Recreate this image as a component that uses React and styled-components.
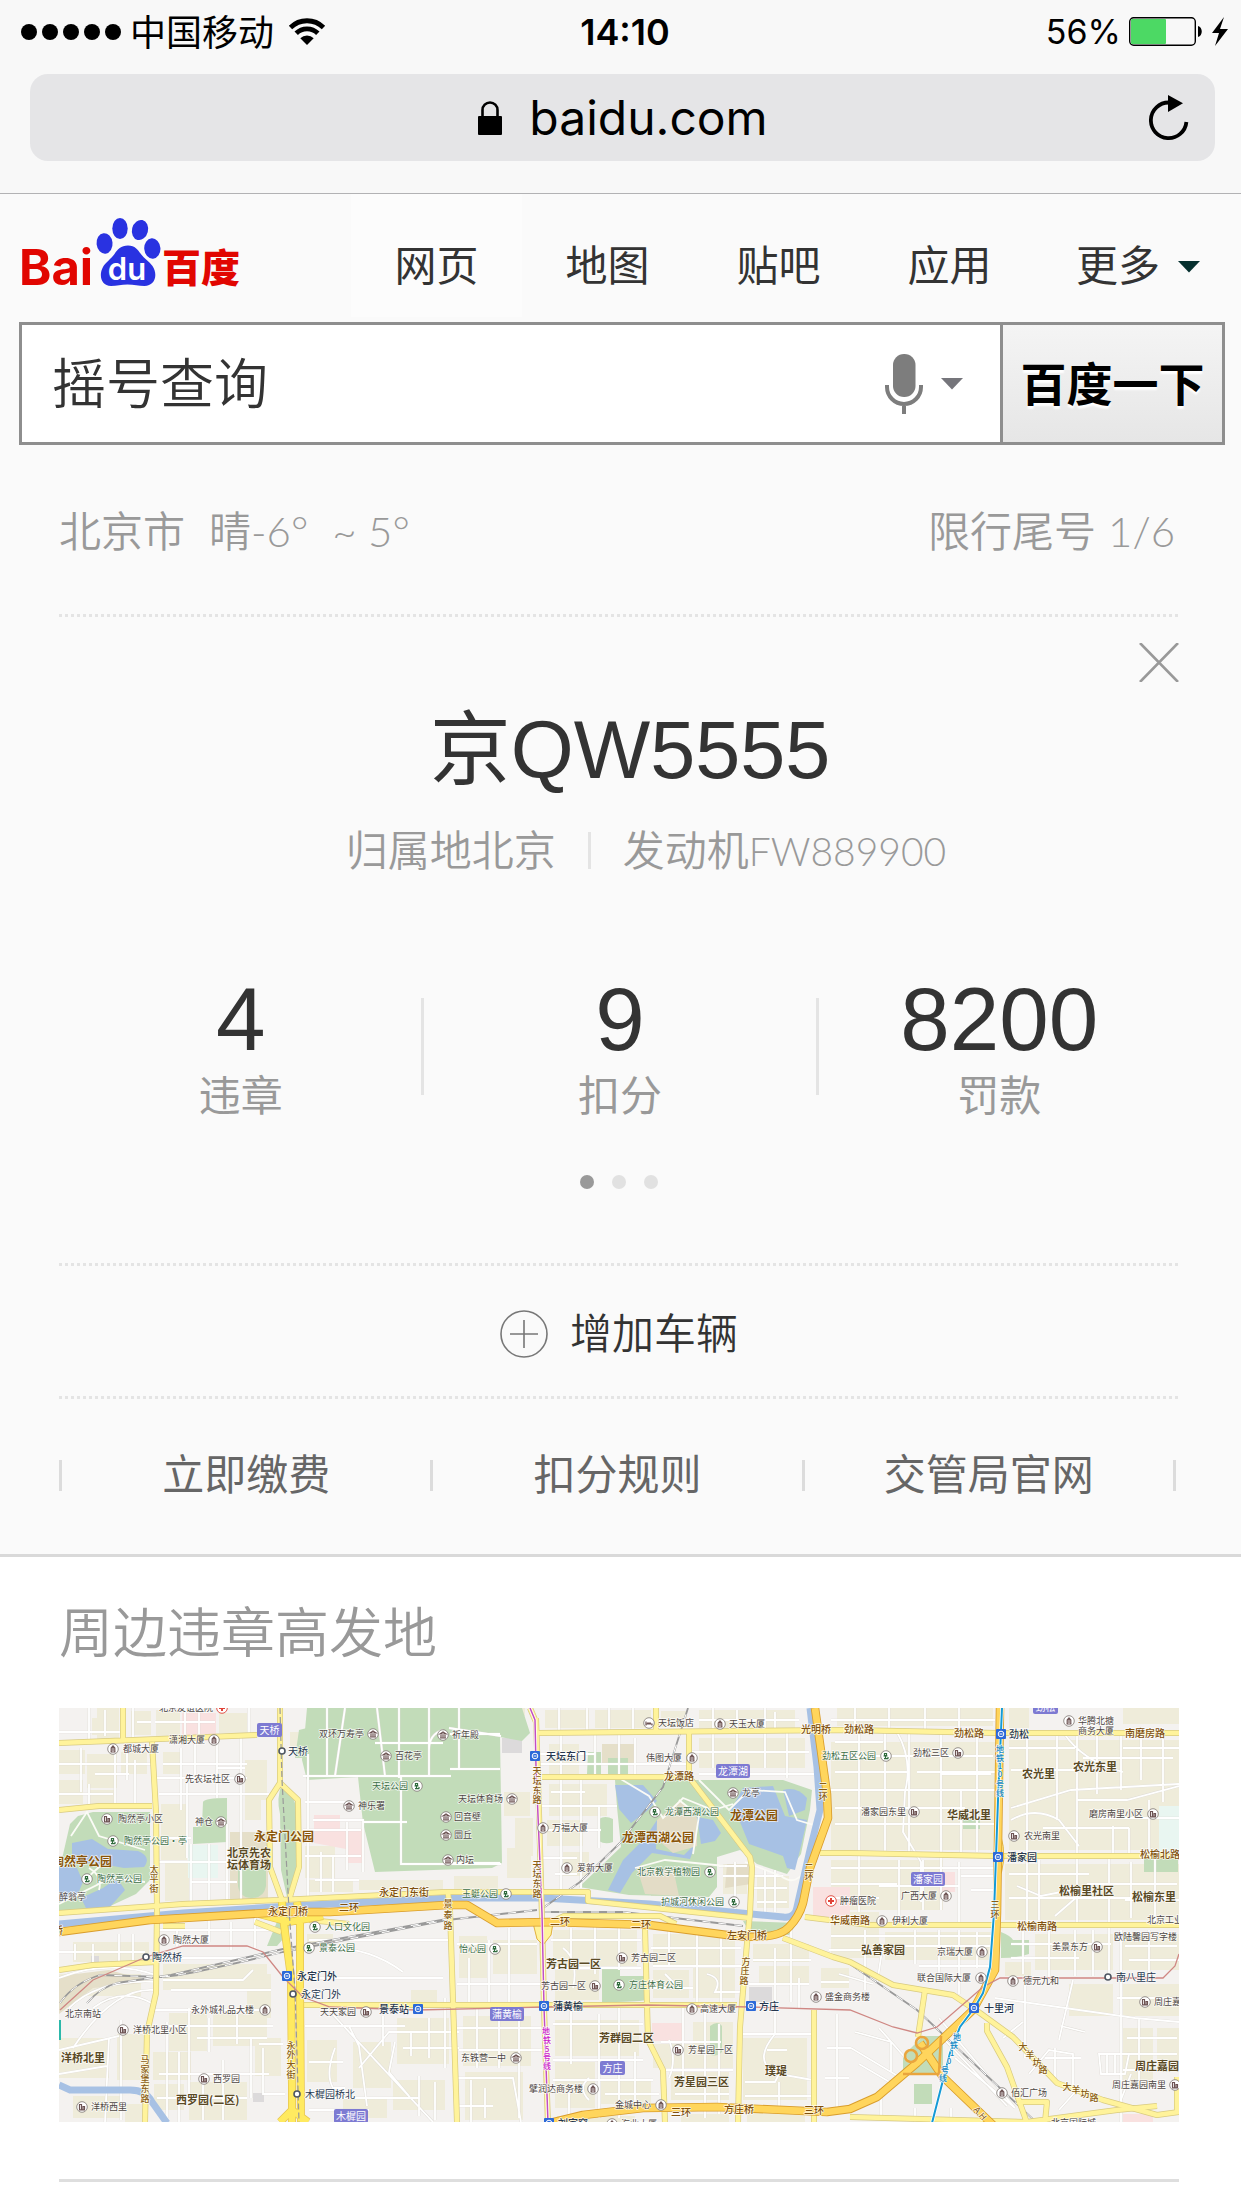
import React from "react";
import styled, { createGlobalStyle } from "styled-components";

const cjk = `"Noto Sans CJK SC", sans-serif`;

const Global = createGlobalStyle`
  * { box-sizing: border-box; }
  body { margin: 0; background: #fff; font-family: "Inter", ${cjk}; color: #333; }
  button, input { font: inherit; color: inherit; border: 0; margin: 0; padding: 0; background: none; }
  a { color: inherit; text-decoration: none; }
  svg { display: block; flex: none; }
`;

/* ---------- browser chrome ---------- */
const Chrome = styled.header`
  background: #f8f8f8;
  border-bottom: 1px solid #b2b2b4;
  padding: 0 26px 32px 30px;
`;
const StatusBar = styled.div`
  display: grid;
  grid-template-columns: 1fr auto 1fr;
  align-items: center;
  height: 74px;
  padding-bottom: 11px;
  margin: 0 -14px 0 -9px;
  color: #000;
  font-size: 34px;
  line-height: 48px;
`;
const StatusGroup = styled.div`
  display: flex;
  align-items: center;
  justify-content: ${(p) => (p.$end ? "flex-end" : "flex-start")};
  gap: ${(p) => (p.$end ? "8px" : "14px")};
`;
const Signal = styled.div`
  display: flex;
  gap: 5px;
  margin-right: -5px;
`;
const SignalDot = styled.i`
  width: 16px;
  height: 16px;
  border-radius: 50%;
  background: #000;
`;
const Carrier = styled.span`
  padding-bottom: 3px;
  font: 36px/48px ${cjk};
`;
const Clock = styled.time`
  font-weight: 600;
  font-size: 36px;
`;
const AddressBar = styled.div`
  display: grid;
  grid-template-columns: 1fr auto 1fr;
  align-items: center;
  height: 87px;
  border-radius: 18px;
  background: #e5e5e7;
  padding: 0 26px;
  color: #000;
`;
const Address = styled.button`
  grid-column: 2;
  display: flex;
  align-items: center;
  gap: 26px;
  font-size: 48px;
  line-height: 60px;
`;
const Reload = styled.button`
  justify-self: end;
`;

/* ---------- nav and search ---------- */
const Main = styled.main`
  background: #fafafa;
  border-bottom: 3px solid #d9d9d9;
`;
const TopNav = styled.nav`
  display: grid;
  grid-template-columns: 351fr repeat(4, 171fr) 206fr;
  height: 123px;
`;
const LogoLink = styled.a`
  padding: 20px 0 0 20px;
`;
const Tab = styled.a`
  display: flex;
  align-items: center;
  justify-content: center;
  gap: 18px;
  padding-top: 14px;
  background: ${(p) => (p.$active ? "#fcfcfc" : "transparent")};
  font: 42px/48px ${cjk};
`;
const TabCaret = styled.span`
  padding-top: 8px;
`;
const SearchForm = styled.form`
  display: flex;
  height: 123px;
  margin: 5px 16px 0 19px;
  border: 3px solid #8e8e8e;
  background: #fff;
`;
const SearchInput = styled.input`
  flex: 1;
  min-width: 0;
  padding: 0 0 6px 30px;
  font: 350 54px/80px ${cjk};
  outline: 0;
`;
const VoiceButton = styled.button`
  display: flex;
  align-items: center;
  gap: 18px;
  padding-right: 37px;
`;
const SearchButton = styled.button`
  width: 222px;
  padding-bottom: 6px;
  border-left: 3px solid #8e8e8e;
  background: linear-gradient(#f4f4f4, #e6e6e6);
  color: #000;
  font: 700 46px/60px ${cjk};
  text-shadow: 0 3px 2px #fff;
`;

/* ---------- vehicle panel ---------- */
const Panel = styled.section`
  margin: 0 62px 0 59px;
`;
const Weather = styled.div`
  display: flex;
  justify-content: space-between;
  padding: 62px 4px 59px 0;
  color: #999;
  font: 350 42px/48px "Lato", ${cjk};
`;
const WeatherPart = styled.span`
  display: flex;
  height: 48px;
  gap: ${(p) => p.$gap || "24px"};
`;
const Latin = styled.span`
  font-weight: 300;
  font-size: ${(p) => p.$size || 42}px;
`;
const Dotted = styled.hr`
  height: 3px;
  margin: 0;
  border: 0;
  background: repeating-linear-gradient(90deg, #e4e4e4 0 3px, transparent 3px 6px);
`;
const CloseRow = styled.div`
  display: flex;
  justify-content: flex-end;
  padding-top: 26px;
`;
const Plate = styled.h1`
  height: 96px;
  margin: 20px 0 28px 22px;
  color: #333;
  text-align: center;
  font: 400 81px/96px "Liberation Sans", ${cjk};
`;
const Detail = styled.p`
  display: flex;
  align-items: center;
  justify-content: center;
  gap: 32px;
  height: 48px;
  margin: 0 0 0 54px;
  color: #999;
  font: 350 42px/48px "Lato", ${cjk};
`;
const Rule = styled.i`
  width: 3px;
  height: ${(p) => p.$h}px;
  background: ${(p) => p.$color || "#e4e4e4"};
`;
const Stats = styled.div`
  display: grid;
  grid-template-columns: 12fr 3px 13fr 3px 12fr;
  align-items: center;
  margin: 98px -1px 0 1px;
`;
const Stat = styled.div`
  display: flex;
  flex-direction: column;
  align-items: center;
`;
const StatNumber = styled.strong`
  color: #333;
  font: 400 89px/94px "Liberation Sans", sans-serif;
`;
const StatLabel = styled.span`
  color: #999;
  font: 42px/54px ${cjk};
`;
const Pager = styled.div`
  display: flex;
  justify-content: center;
  gap: 18px;
  padding: 55px 0 74px;
`;
const PagerDot = styled.button`
  width: 14px;
  height: 14px;
  border-radius: 50%;
  background: ${(p) => (p.$active ? "#999" : "#e1e1e1")};
`;
const AddVehicle = styled.button`
  display: flex;
  align-items: center;
  justify-content: center;
  gap: 22px;
  width: 100%;
  height: 130px;
  padding-top: 5px;
  font: 350 42px/48px ${cjk};
`;
const AddLabel = styled.span`
  padding-bottom: 6px;
`;
const QuickLinks = styled.div`
  display: grid;
  grid-template-columns: 3px 1fr 3px 1fr 3px 1fr 3px;
  align-items: center;
  height: 155px;
  padding-bottom: 3px;
  margin-right: 3px;
`;
const QuickLink = styled.a`
  padding-bottom: 6px;
  color: #666;
  text-align: center;
  font: 42px/48px ${cjk};
`;

const Nearby = styled.section`
  margin: 0 62px 0 59px;
  padding-bottom: 57px;
  border-bottom: 3px solid #dedede;
`;
const NearbyTitle = styled.h2`
  margin: 0;
  padding-bottom: 5px;
  color: #999;
  font: 350 54px/146px ${cjk};
`;
const MapSvg = styled.svg`
  width: 100%;
  height: auto;
  overflow: hidden;
`;

/* ---------- icons ---------- */
const Wifi = () => (
  <svg width="38" height="28" viewBox="0 0 38 28">
    <path d="M2.5 9.5a23.5 23.5 0 0 1 33 0M8.2 15.3a15.3 15.3 0 0 1 21.6 0" fill="none" stroke="#000" strokeWidth="4.8" />
    <path d="M12.3 20.2a9.5 9.5 0 0 1 13.4 0L19 27z" />
  </svg>
);
const Battery = () => (
  <svg width="100" height="30" viewBox="0 0 100 30">
    <rect x=".7" y=".7" width="65.6" height="27.6" rx="4" fill="none" stroke="#000" strokeWidth="1.4" />
    <rect x="2" y="2" width="35" height="25" rx="1" fill="#4cd964" />
    <path d="M69 9c5 1 5 10 0 11z" />
    <path d="M95 0 83 16h7l-4 13 13-17h-8z" />
  </svg>
);
const Lock = () => (
  <svg width="26" height="34" viewBox="0 0 26 34">
    <path d="M5.5 17V9a7.5 7.5 0 0 1 15 0v8" fill="none" stroke="#000" strokeWidth="2.6" />
    <rect x="1" y="15" width="24" height="19" rx="1" />
  </svg>
);
const ReloadIcon = () => (
  <svg width="40" height="46" viewBox="0 0 40 46">
    <path d="M20 7.5A17.8 17.8 0 1 0 37.4 27" fill="none" stroke="#000" strokeWidth="3.8" />
    <path d="m19 0 15 8.3L19 17z" />
  </svg>
);
const Caret = ({ color }) => (
  <svg width="22" height="12" viewBox="0 0 22 12"><path d="M0 0h22L11 11.5z" fill={color} /></svg>
);
const Mic = () => (
  <svg width="38" height="60" viewBox="0 0 38 60" fill="none" stroke="#7d7d7d" strokeWidth="4">
    <rect x="8" y="0" width="22.5" height="43" rx="11" fill="#7d7d7d" stroke="none" />
    <path d="M2 31v2a17 17 0 0 0 34 0v-2M19 50v10" />
  </svg>
);
const Cross = () => (
  <svg width="40" height="39" viewBox="0 0 40 39"><path d="m1 0 38 39M39 0 1 39" stroke="#999" strokeWidth="2.6" /></svg>
);
const PlusCircle = () => (
  <svg width="48" height="48" viewBox="0 0 48 48" fill="none" stroke="#777" strokeWidth="1.6">
    <circle cx="24" cy="24" r="23" /><path d="M24 10v28M10 24h28" />
  </svg>
);
const Logo = () => (
  <svg width="222" height="76" viewBox="0 0 222 76" role="img" aria-label="百度">
    <g fill="#2932e1">
      <ellipse cx="84.5" cy="29.5" rx="8" ry="10.3" transform="rotate(-6 84 29)" />
      <ellipse cx="100" cy="14.5" rx="7.7" ry="10.5" />
      <ellipse cx="120" cy="16" rx="8" ry="10.2" transform="rotate(14 120 16)" />
      <ellipse cx="132.3" cy="34.5" rx="8.1" ry="10.2" transform="rotate(-4 132 34)" />
      <path d="M108 31.5c7 0 10 4.500 12.500 8 3.500 5 8.500 7.500 12 12.500 6 9.500 2 20-8 20-6 0-10.500-1.600-17-1.600S97 72 91 72C81 72 78.500 61 83 53c2.600-4.600 8-8 11.500-13 3-4.500 6.500-8.500 13.500-8.500z" />
    </g>
    <g fill="#e10601" fontFamily="Inter, sans-serif">
      <text x="-1" y="71" fontSize="49" fontWeight="700">Bai</text>
      <text x="142" y="67.500" fontSize="39" fontWeight="900" fontFamily="Noto Sans CJK SC">百度</text>
    </g>
    <text x="107" y="66" fontSize="31" fontWeight="600" fill="#fff" fontFamily="Inter, sans-serif" textAnchor="middle">du</text>
  </svg>
);

/* ---------- map data, in map units 1120 x 414 ---------- */
const blocks = [
  [38, 0, 22, 31], [72, 3, 20, 24], [97, 2, 24, 26], [160, 5, 28, 20], [33, 10, 24, 17],
  [0, 42, 26, 24], [28, 46, 30, 34], [62, 44, 26, 22], [0, 72, 24, 24], [30, 82, 26, 14],
  [104, 44, 18, 22], [186, 52, 22, 40], [102, 96, 26, 56], [40, 110, 28, 20], [106, 155, 24, 38],
  [231, 24, 10, 20], [186, 86, 16, 26], [246, 138, 30, 32], [250, 172, 44, 12], [300, 172, 84, 10],
  [395, 168, 44, 14], [450, 0, 16, 8], [445, 84, 26, 24], [490, 36, 30, 30], [486, 2, 44, 18],
  [536, 2, 56, 18], [602, 3, 26, 16], [640, 2, 96, 18], [640, 30, 106, 30], [490, 76, 58, 32],
  [488, 112, 36, 26], [504, 144, 26, 24], [456, 110, 18, 38], [448, 140, 24, 30],
  [698, 168, 32, 32], [664, 156, 24, 30], [772, 34, 165, 108], [778, 0, 156, 18], [772, 152, 112, 50],
  [950, 32, 170, 110], [950, 0, 20, 20], [1064, 0, 56, 16], [946, 156, 174, 56], [772, 204, 48, 46],
  [826, 224, 106, 28], [976, 226, 78, 36], [1062, 226, 58, 36], [1010, 276, 44, 32], [1064, 276, 56, 32],
  [1064, 320, 30, 60], [1098, 320, 22, 44], [946, 254, 26, 14],
  [14, 234, 76, 20], [0, 266, 82, 22], [104, 256, 104, 26], [188, 266, 24, 44], [110, 305, 38, 38],
  [154, 306, 54, 32], [0, 330, 50, 40], [58, 326, 28, 46], [94, 344, 38, 28], [130, 374, 58, 38],
  [14, 388, 48, 22], [66, 396, 18, 18], [95, 376, 30, 26], [196, 330, 26, 38],
  [248, 226, 26, 12], [352, 282, 26, 16], [248, 332, 30, 42], [294, 334, 38, 46], [338, 310, 52, 46],
  [284, 390, 44, 20], [334, 372, 52, 30], [400, 228, 28, 42], [434, 232, 44, 34], [404, 308, 68, 50],
  [406, 364, 58, 48], [494, 222, 84, 36], [594, 226, 82, 32], [594, 262, 36, 28], [634, 260, 42, 30],
  [496, 262, 44, 30], [496, 312, 84, 36], [496, 354, 40, 46], [542, 372, 50, 24], [594, 336, 80, 24],
  [634, 314, 40, 44], [612, 364, 58, 28], [684, 330, 64, 62], [694, 236, 56, 18], [700, 258, 50, 18],
  [762, 260, 28, 20], [688, 400, 58, 14], [622, 406, 48, 8], [498, 408, 78, 6],
];

const streets = [
  "M30 0v32M0 24h62M46 2v26M74 0v32M78 14h14M96 14h60M126 0v30M140 0v34M190 0v28",
  "M0 56h92M22 40v44M56 38v60M36 66h34M68 42v30M0 86h54M30 76v20M76 52v46",
  "M98 70h90M122 40v62M136 32v40M104 56h84M158 32v58M158 60h28M182 30v166M100 86h110M128 74v76",
  "M98 130h34M100 154h76M132 136v58M150 136v58M168 116v78M132 174h46",
  "M249 46v144M244 122h58M246 148h56M262 144v40M274 148v36M288 114v48M256 172h44M246 94h40M254 112h50v52",
  "M340 0v70M286 0l-10 68M268 0v68M318 0l8 68M244 68h148M342 68v88h100M304 114h44M316 35h68M370 0v68M384 22q-14 4-14 20M442 28l-52-8M400 0v60M391 61h50M391 26h50M391 155h50",
  "M478 46h58M478 98h80M502 26v158M522 70v110M536 26v42M482 122h60M540 98v42M560 26v44M576 30v38M478 56h150M478 150h40M492 84h34M496 166h22",
  "M654 0v60M678 2v56M706 0v60M632 44h118M728 24v46M640 66h128M500 0v24M528 0v24M550 0v24M574 0v24M640 12h100M662 12v12M716 4v20",
  "M660 158h28M664 168h60M676 154v48M706 162v44M716 162v42M694 180h34M698 194h30",
  "M764 82h174M764 48h170M800 24v180M826 24v122M850 24v122M882 22v180M902 82v62M918 24v120M776 64h74M776 100h108M776 116h162M776 34h48M858 64h78M838 24q16 28 8 60l-2 40 18 30v40M860 100h46M882 66h50",
  "M772 160h166M772 176h66M840 152v62M864 152v50M820 178h80M900 154v60M776 190h44M902 168h34M912 182h24M772 12h164M796 0v22M830 0v22M866 0v22M900 0v22",
  "M950 40h66M968 28v190M998 24v88M1018 26v192M1038 28v58M1062 26v56M1082 24v48M1104 26v68M952 62h66M952 100l60-18 108-6M952 112q24-14 48 0l20 26M1018 92h50l52-14M984 120h86M1004 24q20 30 60 40M1064 40h56M1024 50h90M1054 118v28M1070 120v26M1040 110h80M1090 92v52",
  "M950 166h80M958 178l24 10 30-6 16 8M950 190h160M980 152v60M1050 150v120M1072 154v56M1028 176h90M1066 192h54M1096 150v66M996 208l30-26",
  "M772 228h164M770 242h60M806 222v60M824 236l-6 40M856 222v34M880 222v50M900 222v64M918 224v36M846 238h90M860 258h76M780 266l34 10",
  "M952 236h100M964 222v44M990 222v48M1016 222v46M1034 222v46M1062 222v192M1090 222v46M952 250h68M1066 238h52M1070 252h50M936 290l140 20 44 4M966 270v80M1014 272l-14 60M1058 290h62M1068 330h50M1068 346h50M1064 362h36M1002 318l24 6M1080 310v64",
  "M944 330l20-16M970 366l20-24 24 4v36M986 350h36M996 340v34M1040 346h30l-4 20h-24zM1048 346v20M1056 346v20M1000 402l18-20M1058 402l14-36",
  "M820 320l30 34M796 324l36 10v30M792 340l50 30M884 330l64 68M896 350l60 50M880 310l76 90M822 410v-30M856 400v14M892 400v14M800 356l34 20",
  "M0 244h86M16 236v16M34 236v18M60 226v28M74 226v28M0 270q50-20 100-2M10 300q30-30 90-26M100 222h112M118 206v32M150 204v30M172 214v28M196 210v30M104 250h88M104 272h80l10-10M112 282h100",
  "M14 340q40-60 80-58M34 300q30-22 60-4M62 312v100M0 342l60-14M50 330l-4 84M0 366l48-8M96 302h110M108 314v96M130 300v90M150 310v34M178 306v30M110 318h104M138 330h70M100 366h110M120 344v70M144 366v46M164 352v60M192 330v60M200 336h24M204 340v46h22M98 390h90",
  "M250 232h140M272 240q40 0 72 24M248 270h136M246 318h100M290 318l10 20 8 60M276 340q-10 26-2 40h12M264 296l110 118M300 360l30-36h70M324 308v30M336 334l-6 30 20 24M344 340h56M352 324v24M370 310v40M250 354h34M386 290v70M260 390h100M250 402h60M360 368v40M376 374v38",
  "M398 236h80M410 250v44M430 232v64M398 276h86M450 220v78M398 320h90M418 300v60M440 310v50M460 300v110M400 342h84M398 370h56l8 44M412 372v42M426 380v30M400 398h34",
  "M492 232h90M512 220v40M536 216v50M560 218v44M492 260h90M504 240q16 12 10 40M592 240h90M610 222v36M638 226v70M662 230v66M594 258h90M594 280h40M648 266q16 4 8 18h26M606 266l16 16",
  "M494 316h90M512 300v56M540 306v104M494 352h90M560 300v110M576 344v60M494 372h100M546 386h54M510 376v32M530 370q-12 10 0 22M604 362h70M624 300v76M646 300v110M602 334h60M610 370q8-18 0-38M660 316v90M616 386h54",
  "M684 326h70M716 240v86M694 252h58M732 220v74M740 270v30M690 276h60M716 326q-20 24-4 36M708 342h20M686 374h30l4-8 34 6M720 374v32M686 388h66M762 274h28M768 340h24M766 370h24M778 306v94",
];

const parks = [
  "M248 0h215l8 25-8 8-22-4 2 126-10 5-117 4-12-49-5-46-51 3-5-20 3-30z",
  "M556 72h75l93 0 29 10-2 20-9 44-14 20-30-10-17-14-23 7v30l-8 10-80-2-50-8 42-40-4-40z",
  "M11 116l8-8 15-4h57v68l-14 14-30 14-47 8v-44z",
  "M144 94q2-4 24-4v44l-34 2v-17q8 0 9-2z",
  "M223 76q14 14 16 30l-1 56-8 36-8-36-1-56q-4-16 2-30z",
  "M179 160h28v18q-2 12-14 12t-14-12z",
  "M540 111q6-4 14 0v23q-8 3-14-1zM529 44h13v22h-14zM549 50h20v16h-20z",
  "M543 260h18v8h26v24q-10 2-44 2z", "M651 318q8-6 12 0v26q-6 6-12 2z",
  "M844 366v-18l20-20h20v38z", "M855 376h18v20h-18z", "M942 224q10 4 12 8h16v14q-12 4-28 4z",
  "M904 109h17v12h-17z", "M684 213l54 2-8 12-40-4zM208 238l10 0 12-14v-20h-8zM236 50h14l-2-30-8 2z", "M1085 148h34v16h-34z",
];

const water = [
  "M556 77h28l14 16-10 10-16 12-12-14z",
  "M598 112l-12 18-22 22-15 30 12 3 12-20 20-20 38 6 6-16-12 12-28-6z",
  "M638 109l16 3 8 13-6 8-14 3z",
  "M684 80l30-2 12 30 22 4-6 26-6 24-8-2-4-12-34-12-9-22-10-10z",
  "M724 82q14-4 24 8l-2 12-16 6z",
  "M13 135l20-4 16 10 30 2q14 6 6 16l-20 1-22-4-30-2z",
  "M0 158l18 2 6 14-6 14-18 6zM22 190l22-10 14-10 8 12-16 18-22 2z",
];

const majorRoads = [
  "M64 0v33M0 35l100-4 98-4M93 34l4 70 1 98-1 83-9 40-2 90M0 102l40-4 53 0",
  "M221 0v75l-11 17 1 67 12 33M221 75l18 17 1 67-10 33M0 205l124-9 97-4 167-8h141v9l162 17",
  "M0 262l34-5 64-3M389 185l2 17 7 212M241 297h150l197 0h90M478 25l310-3 150 3h182M597 0v24M483 69h148",
  "M630 24v45l61 80 2 10-2 46-3 30-7 84-2 96M586 220l2 77 1 35 15 30 2 53M755 302v112",
  "M761 145h30l147 3h182M746 209l65 8h309M724 230l50 19 17 5 43 23 60 10 27 18 33 24 44 46 46 17 54 15 22-3",
  "M866 282l-7 47M928 315v8l20 36 20 56M791 409l177 5 90-12 40-4M1118 369v36M958 394h30l-2 20M491 215l14-7h96l16 8",
  "M196 214l26 10M250 212l40 4M104 218h22M477 10l2 60 4 140 2 90 4 116M471 0l6 14",
];
const avenue = "M223 194l1 15 8 60 1 110v35M238 194l3 16 0 70 1 134M221 414l12-12 16 12M200 206l30 8 34-6";

const railways = [
  "M1 295q14-20 40-28l60 2q20 0 123-25l164-32 90-10",
  "M28 295q14-16 30-20l54-8 112-26 164-30",
  "M484 200l37-26 40-39 43-56 25-79", "M484 204h80l120 14", "M724 230l67 26 67 46 120 113",
];

const beltways = [
  "M0 224l91-12 133-8 47 0 117-7h20l30 18 53-1 100 3 77 10q50 6 62-8 10-10 14-24l7-35 18-50-1-24-12-86",
  "M941 0l-3 205-2 57-22 40-56 53-40 34-27 12-23 3-110-5-74 1-60 7-33 8",
  "M861 335l23 34 50 48",
];
const metroLine5 = "M471 0l5 12 1 47 6 146 2 94 4 116";
const metroLine10 = "M943 0l-4 92-4 113-4 54-7 26-8 14-15 20-10 26-18 70";

const labels = [
  [64, 41, "都城大厦", 54, "t"], [110, 32, "潇湘大厦", 155, "t"], [126, 71, "先农坛社区", 181, "h"], [59, 111, "陶然亭小区", 48, "h"],
  [136, 114, "神仓", 162, "m"], [65, 133, "陶然亭公园·亭", 54, "p"], [38, 171, "陶然亭公园", 28, "p"], [0, 189, "醉翁亭"],
  [260, 26, "双环万寿亭", 314, "m"], [336, 48, "百花亭", 327, "m"], [313, 78, "天坛公园", 358, "p"], [299, 98, "神乐署", 290, "m"],
  [393, 27, "祈年殿", 384, "m"], [100, 0, "北京友谊医院", 163, "r"], [599, 15, "天坛饭店", 590, "b"], [670, 16, "天玉大厦", 661, "t"],
  [587, 50, "伟图大厦", 633, "t"], [399, 91, "天坛体育场", 453, "m"], [395, 109, "回音壁", 387, "m"], [395, 127, "圜丘", 387, "m"],
  [397, 152, "内坛", 389, "m"], [493, 120, "万福大厦", 484, "t"], [518, 160, "爱新大厦", 508, "t"], [606, 104, "龙潭西湖公园", 596, "p"],
  [683, 85, "龙亭", 674, "m"], [578, 164, "北京教学植物园", 651, "p"], [602, 194, "护城河休闲公园", 675, "p"], [403, 186, "玉蜓公园", 447, "p"],
  [763, 48, "劲松五区公园", 827, "p"], [781, 193, "肿瘤医院", 772, "r"], [1019, 13, "华腾北搪", 1010, "t"], [1019, 23, "商务大厦"],
  [854, 45, "劲松三区", 899, "h"], [802, 104, "潘家园东里", 855, "h"], [1030, 106, "磨房南里小区", 1094, "h"], [965, 128, "农光南里", 955, "h"],
  [842, 188, "广西大厦", 887, "t"], [1088, 212, "北京工业"], [833, 213, "伊利大厦", 823, "t"], [1055, 229, "欧陆馨园写字楼"],
  [993, 239, "美景东方", 1038, "h"], [878, 244, "京瑞大厦", 923, "t"], [858, 270, "联合国际大厦", 922, "t"], [964, 273, "德元九和", 954, "t"],
  [1095, 294, "周庄嘉园", 1086, "h"], [766, 289, "盛金商务楼", 757, "t"], [1053, 377, "周庄嘉园南里", 1116, "h"], [952, 385, "佰汇广场", 943, "t"],
  [992, 415, "北京国际城"], [114, 232, "陶然大厦", 105, "t"], [266, 219, "人口文化园", 256, "p"], [260, 240, "景泰公园", 250, "p"],
  [261, 304, "天天家园", 307, "h"], [132, 302, "永外城礼品大楼", 206, "t"], [6, 306, "北京南站"], [74, 322, "洋桥北里小区", 64, "h"],
  [154, 371, "西罗园", 145, "h"], [32, 399, "洋桥西里", 23, "h"], [400, 241, "怡心园", 436, "p"], [572, 250, "芳古园二区", 563, "h"],
  [482, 278, "芳古园一区", 536, "h"], [570, 277, "方庄体育公园", 560, "p"], [641, 301, "高速大厦", 633, "t"], [629, 342, "芳星园一区", 619, "h"],
  [402, 350, "东铁营一中", 457, "m"], [470, 381, "擘润达商务楼", 534, "t"], [556, 397, "金城中心", 602, "t"], [562, 416, "海业大厦", 553, "t"],
];

const districts = [
  [168, 145, "北京先农"], [168, 157, "坛体育场"], [963, 66, "农光里"], [1014, 59, "农光东里"], [888, 107, "华威北里"],
  [1000, 183, "松榆里社区"], [1073, 189, "松榆东里"], [802, 242, "弘善家园"], [1076, 358, "周庄嘉园("], [2, 350, "洋桥北里"],
  [117, 392, "西罗园(二区)"], [487, 256, "芳古园一区"], [540, 330, "芳群园二区"], [615, 374, "芳星园三区"], [706, 363, "璞瑅"],
];
const scenic = [[-7, 154, "陶然亭公园"], [195, 129, "永定门公园"], [563, 130, "龙潭西湖公园"], [671, 108, "龙潭公园"]];
const roadNames = [
  [320, 184, "永定门东街"], [280, 199, "二环"], [209, 203, "永定门桥"], [742, 21, "光明桥"], [785, 21, "劲松路"], [605, 68, "龙潭路"],
  [895, 25, "劲松路"], [1066, 25, "南磨房路"], [1081, 146, "松榆北路"], [958, 218, "松榆南路"], [771, 212, "华威南路"], [-6, 222, "桥"],
  [491, 213, "二环"], [572, 216, "二环"], [668, 227, "左安门桥"], [612, 404, "三环"], [665, 401, "方庄桥"], [745, 402, "三环"],
];
const verticalNames = [
  ["太平街", [95, 162], [95, 171], [95, 181]], ["天坛东路", [478, 63], [478, 73], [478, 83], [478, 92]],
  ["天坛东路", [478, 157], [478, 166], [478, 176], [478, 186]], ["景泰路", [389, 196], [389, 207], [389, 218]],
  ["二环", [764, 79], [764, 89]], ["二环", [750, 160], [750, 169]], ["三环", [936, 197], [936, 207]],
  ["大羊坊路", [964, 339], [971, 347], [978, 355], [984, 362]], ["大羊坊路", [1008, 379], [1017, 382], [1026, 386], [1035, 390]],
  ["马家堡东路", [86, 352], [86, 362], [86, 371], [86, 381], [86, 391]], ["永外大街", [232, 338], [232, 347], [232, 357], [232, 367]],
  ["方庄路", [687, 254], [686, 263], [685, 273]],
];
const metroNames = [
  ["地铁10号线", "#1187c4", [941, 41], [941, 50], [941, 58], [941, 66], [941, 76], [941, 85]],
  ["地铁10号线", "#1187c4", [898, 329], [895, 337], [893, 345], [890, 353], [886, 362], [884, 370]],
  ["地铁5号线", "#cc22cc", [487, 323], [488, 332], [488, 341], [488, 349], [488, 358]],
];
const stations = [
  [476, 48, 487, "天坛东门"], [942, 26, 950, "劲松"], [939, 149, 948, "潘家园"], [915, 300, 925, "十里河"], [228, 268, 238, "永定门外"],
  [359, 301, 320, "景泰站"], [485, 298, 494, "蒲黄榆"], [692, 298, 700, "方庄"], [490, 415, 499, "刘家窑"],
];
const stops = [[223, 43, 229, "天桥"], [87, 249, 93, "陶然桥"], [234, 286, 242, "永定门外"], [238, 386, 246, "木樨园桥北"], [1049, 269, 1057, "南八里庄"]];
const badges = [[198, 22, 25, "天桥"], [657, 63, 34, "龙潭湖"], [852, 171, 34, "潘家园"], [974, -1, 25, "劲松"], [275, 408, 34, "木樨园"], [431, 306, 34, "蒲黄榆"], [541, 360, 25, "方庄"]];

const poiGlyph = {
  t: "M-2.500 3h5M-1.800 2.500v-3.500L0-3l1.800 2v3.500M0-2v4",
  h: "M-2.500 2.500v-5h2v5M1 2.500v-3h1.500v3M-3 2.800h6",
  m: "M-3-1L0-3l3 2zM-2 0v2M0 0v2M2 0v2M-3 2.800h6",
  b: "M-3-1.500v4M-3 1h6v1.500M-2 0h4",
  p: "M-1.500-2.500h2v2h-2zM-2.500 0h4M-.500 0v2.500M-2 2.700h4.500M2 1v1",
  r: "M0-3v6M-3 0h6",
};
const Poi = ({ x, y, kind }) => {
  const color = kind === "p" ? "#2f6b3c" : kind === "r" ? "#e04338" : "#6d5353";
  return (
    <g transform={`translate(${x} ${y})`} fill="none" stroke={color}>
      <circle r="5.300" fill="#fff" stroke={kind === "r" ? color : "#8b8580"} strokeWidth=".9" />
      <path d={poiGlyph[kind]} strokeWidth={kind === "r" ? 2 : 1.2} />
    </g>
  );
};
const Stacked = ({ text, points, color, size }) =>
  points.map(([x, y], i) => (
    <text key={i} x={x} y={y + 3} fontSize={size} fontWeight="500" fill={color} textAnchor="middle">
      {text.startsWith("地铁10") ? ["地", "铁", "1", "0", "号", "线"][i] : text[i]}
    </text>
  ));

const CityMap = () => (
  <MapSvg viewBox="0 0 1120 414" role="img" aria-label="周边违章高发地地图" fontFamily="Noto Sans CJK SC, sans-serif">
    <rect width="1120" height="414" fill="#f4f2f0" />
    {blocks.map(([x, y, w, h], i) => <rect key={i} x={x} y={y} width={w} height={h} fill="#efecda" />)}
    <path d="M123 5h34v28h-34zM255 107h26v14h24l-2 34h-16v-14l-32-6zM754 179h37v32h-37zM593 315h30v18h-30zM1064 406h30v8h-30zM880 164h16v20h-16z" fill="#f9e1e0" />
    <path d="M129 137h30v33h-30zM1100 98h20v48h-20z" fill="#e9f6f1" />
    <path d="M443 30h20v15h-20zM690 279h23v15h-23zM194 385h11v9h-11zM32 248h8v7h-8z" fill="#dcdadb" />
    <path d="M171 124h38v68h-38zM590 164l22 0 8 24-28 0zM543 36h33v19h-33zM0 268l50-6 44 12-60 6-34 26z" fill="#e5dfc9" />
    {parks.map((d) => <path key={d} d={d} fill="#c2dcb9" />)}
    {water.map((d) => <path key={d} d={d} fill="#a7c1e4" />)}
    <path d="M598 112l23-20 17 18v28l-24 7-16-14zM578 160l36 0 6 28-34-2zM668 156l24 0v20l-26 4z" fill="#e3dcc6" />
    <g fill="none" stroke="#dedbd5" strokeWidth="2.600">{streets.map((d) => <path key={d} d={d} />)}</g>
    <g fill="none" stroke="#fff" strokeWidth="1.800">{streets.map((d) => <path key={d} d={d} />)}</g>
    <path d="M12 128l16-24 12 24 46 14M28 170l22-20M0 196l52-26 34 4M30 160q14 8 10 22M560 70l30 18 14 22 20-20 30 12 20-6M576 160l30-8 60 6M620 92l20 16-6 38M640 72l30 30 20-20 36 2 12 28 20 6-10 40q-10 22-26 10l-36-14" fill="none" stroke="#fbfbf6" strokeWidth="1.800" />
    <g fill="none" stroke="#a7c1e4" strokeWidth="7">
      <path d="M0 216l124-11 107-7 160-8h93l107 6 133 13q12 2 14-10l13-57 10-40-3-43-7-59" />
      <path d="M0 377l11 5h60q16 0 22 12l15 21" />
    </g>
    <g fill="none" stroke="#999" strokeWidth="1.800">{railways.map((d) => <path key={d} d={d} />)}</g>
    <g fill="none" stroke="#fff" strokeWidth="1" strokeDasharray="8 8">{railways.map((d) => <path key={d} d={d} />)}</g>
    <g fill="none" stroke="#d9cb80" strokeWidth="6" strokeLinejoin="round">{majorRoads.map((d) => <path key={d} d={d} />)}</g>
    <g fill="none" stroke="#fff39b" strokeWidth="4.600" strokeLinejoin="round">{majorRoads.map((d) => <path key={d} d={d} />)}</g>
    <path d={avenue} fill="none" stroke="#e6c552" strokeWidth="8" />
    <path d={avenue} fill="none" stroke="#ffea60" strokeWidth="6.500" />
    <path d="M221 0l2 72 7 130 6 80 4 132" fill="none" stroke="#999" strokeWidth="1.200" strokeDasharray="6 3" />
    <path d="M941 124q-10 16-3 50 12-20 3-50zM474 215l4 16 6 6 8-10 2-12" fill="#fff39b" stroke="#e2b13e" />
    <g fill="none" stroke="#d99d2c" strokeWidth="8.500" strokeLinejoin="round">{beltways.map((d) => <path key={d} d={d} />)}</g>
    <g fill="none" stroke="#ffd55c" strokeWidth="6.800" strokeLinejoin="round">{beltways.map((d) => <path key={d} d={d} />)}</g>
    <g fill="none" stroke="#e9a53e" strokeWidth="2.600">
      <circle cx="863" cy="335" r="6" /><circle cx="852" cy="348" r="6" /><path d="M844 366h36l2-38" />
    </g>
    <path d="M1 302l33-30 53-23 37-11h64l16 6 20 25 20 20 27 10 87 3 126-3 104-2 103 2 100 3 43 17 24 6 20-6 46-40 17-9h163l12-12 4-12" fill="none" stroke="#cf8783" strokeWidth="1.300" />
    <path d={metroLine5} fill="none" stroke="#fff" strokeWidth="3" />
    <path d={metroLine5} fill="none" stroke="#c24fc0" strokeWidth="1.500" />
    <path d={metroLine10} fill="none" stroke="#fff" strokeWidth="3.500" />
    <path d={metroLine10} fill="none" stroke="#159ad6" strokeWidth="2" />
    <path d="M0 312v20" stroke="#2cb8aa" strokeWidth="4" />
    <g stroke="#fff" strokeOpacity=".75" strokeWidth="1.600" paintOrder="stroke" strokeLinejoin="round">
      <g fontSize="9">
        {labels.map(([x, y, t, , kind]) => <text key={t + x} x={x} y={y + 3} fill={kind === "p" ? "#3d6e48" : "#4e4744"}>{t}</text>)}
      </g>
      <g fontSize="11" fontWeight="700" fill="#5a4a25">
        {districts.map(([x, y, t]) => <text key={t + x} x={x} y={y + 4}>{t}</text>)}
      </g>
      <g fontSize="12" fontWeight="700" fill="#8a5508">
        {scenic.map(([x, y, t]) => <text key={t + x} x={x} y={y + 4}>{t}</text>)}
      </g>
      <g fontSize="10" fontWeight="500" fill="#80500e">
        {roadNames.map(([x, y, t]) => <text key={t + x} x={x} y={y + 4}>{t}</text>)}
      </g>
      {verticalNames.map(([t, ...pts]) => <Stacked key={t + pts[0]} text={t} points={pts} color="#8a5d14" size="9" />)}
      {metroNames.map(([t, c, ...pts]) => <Stacked key={t + pts[0]} text={t} points={pts} color={c} size="8" />)}
      <g fontSize="10" fill="#26374f">
        {stations.map(([, y, x, t]) => <text key={t} x={x} y={y + 4} fontWeight="500">{t}</text>)}
        {stops.map(([, y, x, t]) => <text key={t} x={x} y={y + 4}>{t}</text>)}
      </g>
      <text x="914" y="402" fontSize="9" fill="#80561a" transform="rotate(50 914 402)">A.H</text>
    </g>
    {labels.filter((l) => l[3]).map(([x, y, t, ix, kind]) => <Poi key={t + x} x={ix} y={y} kind={kind} />)}
    {stations.map(([x, y, , t]) => (
      <g key={t} transform={`translate(${x} ${y})`}>
        <rect x="-5" y="-5" width="10" height="10" rx="1" fill="#2c69d8" />
        <circle r="2.800" fill="none" stroke="#fff" />
        <path d="M-1.500 0h3" stroke="#fff" />
      </g>
    ))}
    {stops.map(([x, y, , t]) => <circle key={t} cx={x} cy={y} r="3" fill="#fff" stroke="#4e5663" strokeWidth="1.600" />)}
    {badges.map(([x, y, w, t]) => (
      <g key={t}>
        <rect x={x} y={y - 7} width={w} height="14" rx="2" fill="#7d7ad2" />
        <text x={x + w / 2} y={y + 4} fontSize="10" fill="#fff" textAnchor="middle">{t}</text>
      </g>
    ))}
  </MapSvg>
);

const stats = [["4", "违章"], ["9", "扣分"], ["8200", "罚款"]];

export default function App() {
  return (
    <>
      <Global />
      <Chrome>
        <StatusBar>
          <StatusGroup>
            <Signal>{[0, 1, 2, 3, 4].map((n) => <SignalDot key={n} />)}</Signal>
            <Carrier>中国移动</Carrier>
            <Wifi />
          </StatusGroup>
          <Clock>14:10</Clock>
          <StatusGroup $end>
            <span>56%</span>
            <Battery />
          </StatusGroup>
        </StatusBar>
        <AddressBar>
          <Address type="button"><Lock />baidu.com</Address>
          <Reload type="button" aria-label="刷新"><ReloadIcon /></Reload>
        </AddressBar>
      </Chrome>

      <Main>
        <TopNav>
          <LogoLink href="#home"><Logo /></LogoLink>
          <Tab href="#web" $active>网页</Tab>
          <Tab href="#map">地图</Tab>
          <Tab href="#tieba">贴吧</Tab>
          <Tab href="#apps">应用</Tab>
          <Tab href="#more">更多<TabCaret><Caret color="#06302f" /></TabCaret></Tab>
        </TopNav>
        <SearchForm onSubmit={(e) => e.preventDefault()}>
          <SearchInput aria-label="搜索" defaultValue="摇号查询" />
          <VoiceButton type="button" aria-label="语音搜索"><Mic /><Caret color="#75757b" /></VoiceButton>
          <SearchButton type="submit">百度一下</SearchButton>
        </SearchForm>

        <Panel>
          <Weather>
            <WeatherPart>
              <span>北京市</span>
              <span>晴<Latin>-6°</Latin></span>
              <Latin>~ 5°</Latin>
            </WeatherPart>
            <WeatherPart $gap="12px"><span>限行尾号</span><Latin>1/6</Latin></WeatherPart>
          </Weather>
          <Dotted />
          <CloseRow><button type="button" aria-label="关闭"><Cross /></button></CloseRow>
          <Plate>京QW5555</Plate>
          <Detail><span>归属地北京</span><Rule $h={37} /><span>发动机<Latin $size={39}>FW889900</Latin></span></Detail>
          <Stats>
            {stats.map(([n, label], i) => (
              <React.Fragment key={label}>
                {i > 0 && <Rule $h={97} />}
                <Stat><StatNumber>{n}</StatNumber><StatLabel>{label}</StatLabel></Stat>
              </React.Fragment>
            ))}
          </Stats>
          <Pager>
            {[1, 2, 3].map((n) => <PagerDot key={n} type="button" $active={n === 1} aria-label={`第${n}页`} />)}
          </Pager>
          <Dotted />
          <AddVehicle type="button"><PlusCircle /><AddLabel>增加车辆</AddLabel></AddVehicle>
          <Dotted />
          <QuickLinks>
            <Rule $h={31} $color="#dcdcdc" />
            {["立即缴费", "扣分规则", "交管局官网"].map((t) => (
              <React.Fragment key={t}>
                <QuickLink href={`#${t}`}>{t}</QuickLink>
                <Rule $h={31} $color="#dcdcdc" />
              </React.Fragment>
            ))}
          </QuickLinks>
        </Panel>
      </Main>

      <Nearby>
        <NearbyTitle>周边违章高发地</NearbyTitle>
        <CityMap />
      </Nearby>
    </>
  );
}
